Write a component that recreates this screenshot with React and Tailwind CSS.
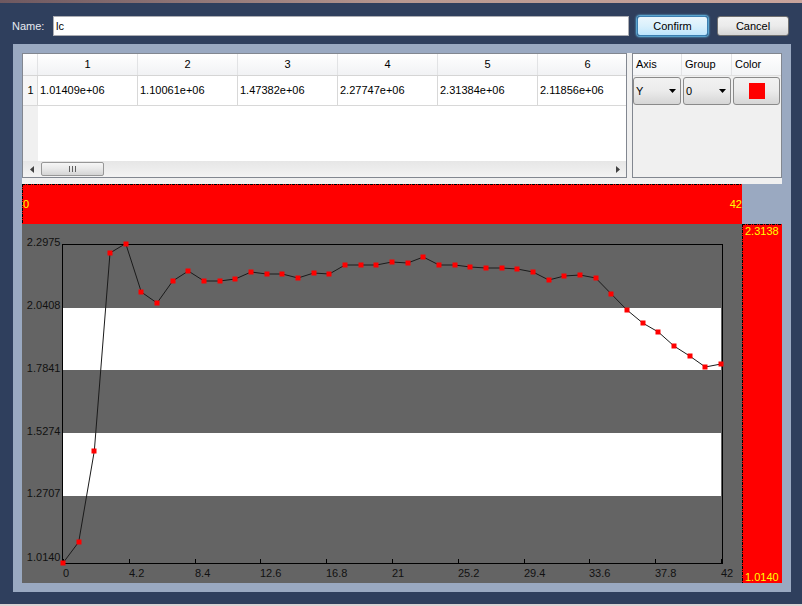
import React from 'react';

const ys = [563,542,451,253,243.5,292,303,281,271,281,281,279,272,274,274,278,273,274,265,265,265,262,263,257,265,265,267,268,268,269,272,280,276,275,278,294,310,323,332,346,356,367,364];

function Chart() {
  const pts = ys.map((y, i) => [41 + (i * 658) / 42, y - 224]);
  const line = pts.map((p) => p[0].toFixed(1) + ',' + p[1].toFixed(1)).join(' ');
  const yl = [['2.2975', 242], ['2.0408', 305], ['1.7841', 368], ['1.5274', 431], ['1.2707', 493], ['1.0140', 557]];
  const xl = ['0', '4.2', '8.4', '12.6', '16.8', '21', '25.2', '29.4', '33.6', '37.8', '42'];
  return (
    <svg width="720" height="359" className="block" style={{ fontFamily: 'Liberation Sans, sans-serif' }}>
      <rect width="720" height="359" fill="#646464" />
      <rect x="41" y="84" width="658" height="62" fill="#ffffff" />
      <rect x="41" y="209" width="658" height="63" fill="#ffffff" />
      <rect x="40.5" y="20.5" width="660" height="319" fill="none" stroke="#000" strokeWidth="1" />
      {xl.map((t, k) => {
        const x = Math.round(41 + k * 65.8) + 0.5;
        return (
          <g key={t}>
            <line x1={x} y1="335" x2={x} y2="339" stroke="#000" />
            <text x={x - 0.5} y="353" fontSize="11" fill="#111">{t}</text>
          </g>
        );
      })}
      {yl.map(([t, c]) => (
        <text key={t} x="38.5" y={c - 224 + 4} fontSize="11" fill="#111" textAnchor="end">{t}</text>
      ))}
      <polyline points={line} fill="none" stroke="#1a1a1a" strokeWidth="1" />
      {pts.map((p, i) => (
        <rect key={i} x={Math.round(p[0]) - 2.5} y={Math.round(p[1]) - 2.5} width="5" height="5" fill="#ff0000" />
      ))}
    </svg>
  );
}

function DashH() {
  return (
    <svg className="absolute left-0 top-0 pointer-events-none" width="100%" height="100%">
      <line x1="0" y1="0.5" x2="100%" y2="0.5" stroke="#000" strokeDasharray="3 1 1 1" />
      <line x1="0.5" y1="0" x2="0.5" y2="100%" stroke="#000" strokeDasharray="3 1 1 1" />
    </svg>
  );
}

function Arrow() {
  return (
    <svg width="7" height="4" className="block">
      <polygon points="0,0 7,0 3.5,4" fill="#000" />
    </svg>
  );
}

function Combo({ label, w }) {
  return (
    <div className={`${w} h-[28px] shrink-0 rounded-[3px] border border-[#8a8a8a] bg-linear-to-b from-[#f2f2f2] via-[#ebebeb] to-[#d6d6d6] flex items-center justify-between pl-[2px] pr-[4px]`}>
      <span>{label}</span>
      <Arrow />
    </div>
  );
}

export default function App() {
  const vals = ['1.01409e+06', '1.10061e+06', '1.47382e+06', '2.27747e+06', '2.31384e+06', '2.11856e+06'];
  return (
    <div className="w-[802px] h-[606px] bg-[#2f3f5d] flex flex-col overflow-hidden font-['Liberation_Sans',sans-serif] text-[11px] text-black">
      <div className="h-[3px] bg-linear-to-r from-[#6e5860] via-[#b89890] to-[#c8a49c]" />
      <div className="h-[41px] flex items-start pt-[13px] pl-[12px]">
        <span className="w-[41px] h-[20px] leading-[20px] text-[#e6eaf0]">Name:</span>
        <div className="w-[576px] h-[20px] bg-white border border-[#abadb3] pl-[2px] leading-[18px]">lc</div>
        <div className="ml-[8px] w-[71px] h-[20px] rounded-[3px] border border-[#3c7fb1] bg-linear-to-b from-[#eaf6fd] via-[#d9f0fc] to-[#bee6fd] shadow-[0_0_2px_1px_#6cc9f7] flex items-center justify-center">Confirm</div>
        <div className="ml-[9px] w-[72px] h-[20px] rounded-[3px] border border-[#707070] bg-linear-to-b from-[#f2f2f2] via-[#ebebeb] to-[#d5d5d5] flex items-center justify-center">Cancel</div>
      </div>
      <div className="ml-[13px] w-[778px] h-[548px] bg-[#9aa9c1] p-[9px]">
        <div className="w-[760px] h-[530px] bg-[#f0f0f0] flex flex-col">
          <div className="h-[125px] flex gap-[5px]">
            {/* table */}
            <div className="w-[605px] h-[125px] border border-[#828790] bg-white flex flex-col overflow-hidden">
              <div className="h-[22px] flex shrink-0 border-b border-[#d5d5d5] bg-linear-to-b from-white to-[#f1f2f4]">
                <div className="w-[15px] shrink-0 border-r border-[#e2e3e5]" />
                {[1, 2, 3, 4, 5, 6].map((n) => (
                  <div key={n} className="w-[100px] shrink-0 border-r border-[#e2e3e5] text-center leading-[21px]">{n}</div>
                ))}
              </div>
              <div className="h-[30px] flex shrink-0">
                <div className="w-[15px] shrink-0 bg-[#f6f6f6] border-r border-b border-[#d8d8d8] text-center leading-[29px] pl-[1px]">1</div>
                {vals.map((v) => (
                  <div key={v} className="w-[100px] shrink-0 border-r border-b border-[#d8d8d8] pl-[2px] leading-[29px]">{v}</div>
                ))}
              </div>
              <div className="flex-1 flex">
                <div className="w-[15px] bg-[#f0f0f0]" />
              </div>
              <div className="h-[16px] shrink-0 flex items-center bg-linear-to-b from-[#e6e6e6] to-[#f3f3f3]">
                <div className="w-[17px] flex items-center justify-center">
                  <svg width="4" height="7" className="block"><polygon points="4,0 4,7 0,3.5" fill="#404040" /></svg>
                </div>
                <div className="ml-[1px] w-[63px] h-[14px] rounded-[2px] border border-[#979797] bg-linear-to-b from-[#f6f6f6] via-[#e8e8e8] to-[#d4d4d4] flex items-center justify-center gap-[2px]">
                  <div className="w-[1px] h-[6px] bg-[#606060]" />
                  <div className="w-[1px] h-[6px] bg-[#606060]" />
                  <div className="w-[1px] h-[6px] bg-[#606060]" />
                </div>
                <div className="flex-1" />
                <div className="w-[17px] flex items-center justify-center">
                  <svg width="4" height="7" className="block"><polygon points="0,0 0,7 4,3.5" fill="#404040" /></svg>
                </div>
              </div>
            </div>
            {/* side panel */}
            <div className="w-[150px] h-[125px] border border-[#828790] bg-[#f0f0f0] flex flex-col">
              <div className="h-[22px] flex shrink-0 border-b border-[#e0e0e0] bg-linear-to-b from-white to-[#f3f4f6]">
                <div className="w-[49px] border-r border-[#e2e3e5] pl-[3px] leading-[21px]">Axis</div>
                <div className="w-[50px] border-r border-[#e2e3e5] pl-[3px] leading-[21px]">Group</div>
                <div className="w-[49px] pl-[3px] leading-[21px]">Color</div>
              </div>
              <div className="mt-[1px] flex gap-[2px]">
                <Combo label="Y" w="w-[48px]" />
                <Combo label="0" w="w-[48px]" />
                <div className="w-[47px] h-[28px] shrink-0 rounded-[3px] border border-[#8a8a8a] bg-linear-to-b from-[#f2f2f2] via-[#ebebeb] to-[#d6d6d6] flex items-center justify-center">
                  <div className="w-[16px] h-[16px] bg-[#ff0000]" />
                </div>
              </div>
            </div>
          </div>
          <div className="h-[6px]" />
          <div className="grid grid-cols-[720px_40px] grid-rows-[40px_359px]">
            <div className="relative bg-[#ff0000] flex items-center justify-between text-[#ffff00] pl-[1px]">
              <DashH />
              <span>0</span>
              <span>42</span>
            </div>
            <div className="bg-[#9aa9c1]" />
            <div>
              <Chart />
            </div>
            <div className="relative bg-[#ff0000] flex flex-col justify-between text-[#ffff00] pl-[3px] pt-[1px] pb-0 leading-[13px]">
              <DashH />
              <span>2.3138</span>
              <span className="translate-y-[1px]">1.0140</span>
            </div>
          </div>
        </div>
      </div>
      <div className="h-[12px]" />
      <div className="h-[2px] bg-[#d9d2d2]" />
    </div>
  );
}
